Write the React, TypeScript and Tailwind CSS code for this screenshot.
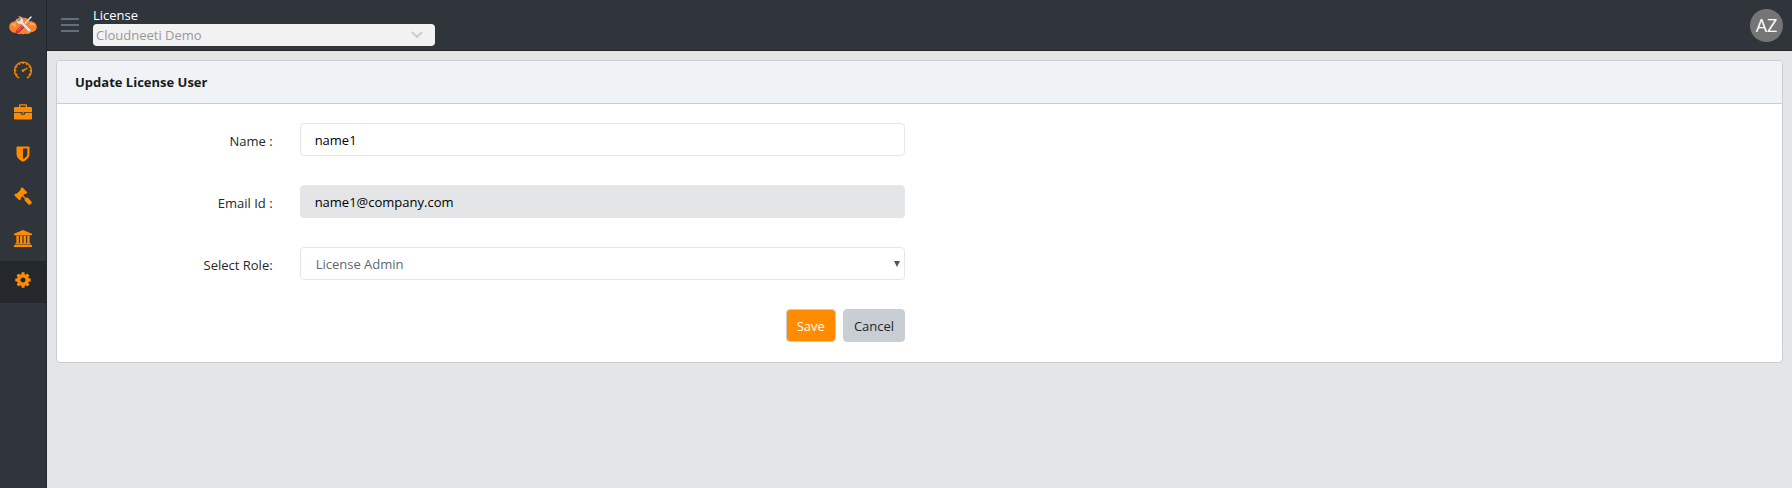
import type { ReactNode } from "react";
import { SlSpeedometer } from "react-icons/sl";

function CloudLogo() {
  return (
    <svg viewBox="0 0 28 20" className="h-5 w-7" aria-hidden="true">
      <path d="M7 17.800C3.500 18.200.2 15.500.2 12 .2 8.500 2.800 6.300 6 6.500 7 3.500 9.500 2.500 13 2.500s6.500 1 7.500 3.800c4 -.3 7.300 2.200 7.300 5.700 0 3.200-2.800 5.400-5.800 5.200-1.500 1.800-3.500 2.300-5.200 1.300-1.500 1-3 1-4.500.2C10.500 19.700 8.500 19 7 17.800z" fill="#fb812c" />
      <path d="M1.500 11C2 8.500 4.500 7.500 7 7.500v5C5 11 3 10.500 1.500 11zM20.500 7.500c3-.2 5.500 1.200 6 3.500-1.800-1-3.800-1-5.500 0z" fill="#ffa264" />
      <path d="M7.300 15.300 13.500 9.300l2.400 2.400-6.200 6.200c-2 1-3.800-.8-2.400-2.600z" fill="#cf2e30" />
      <path d="M8.400 15.900 14 10.500" stroke="#f3a09c" strokeWidth=".8" />
      <path d="M22 2 14.500 10" stroke="#dfe4e8" strokeWidth="1.600" strokeLinecap="round" />
      <path d="M9.500 1.200 11.900 3.600 11.200 5.800 9 6.400 7.200 4.600C6.800 7.800 9.600 9.700 12.300 8.900l7.100 7.500c1.300 1.200 3.200-.5 2.100-1.900L14.300 7.400C15 4.300 12.600 1.300 9.500 1.200z" fill="#e6eaee" stroke="#87909a" strokeWidth=".5" />
    </svg>
  );
}

function Briefcase() {
  return (
    <svg viewBox="0 0 18 16" className="h-4 w-[18px]" fill="currentColor" aria-hidden="true">
      <path fillRule="evenodd" d="M5 3V1.500C5 .7 5.500.2 6.300.2h5.400c.8 0 1.300.5 1.300 1.300V3h3.700c.8 0 1.300.5 1.300 1.300V8H0V4.300C0 3.500.5 3 1.300 3zm1.300 0h5.400V1.500H6.300z" />
      <path d="M0 8.700h6.700v.8c0 .8.700 1.300 1.400 1.300h1.800c.7 0 1.400-.5 1.400-1.300v-.8H18v5.500c0 .8-.5 1.300-1.300 1.300H1.300C.5 15.500 0 15 0 14.200z" />
      <path d="M7.700 8.500h2.600v1.200H7.700z" />
    </svg>
  );
}

function Shield() {
  return (
    <svg viewBox="0 0 14 16" className="h-4 w-3.5" fill="currentColor" aria-hidden="true">
      <path fillRule="evenodd" d="M1.200.5h11.600c.4 0 .7.300.7.700V8c0 3.800-3.500 6.500-6.500 7.700C4 14.500.5 11.800.5 8V1.200c0-.4.300-.7.700-.7zM7 2.500v10.800c2.200-1.200 4.300-3 4.300-5.300V2.500z" />
    </svg>
  );
}

function Gavel() {
  return (
    <svg viewBox="0 0 1792 1792" className="size-[18px]" fill="currentColor" aria-hidden="true">
      <path d="M1771 1536q0 53-37 90l-107 108q-39 37-91 37-53 0-90-37l-363-364q-38-36-38-90 0-53 43-96l-256-256-126 126q-14 14-34 14t-34-14q2 2 12.500 12t12.500 13 10 11.500 10 13.500 6 13.500 5.500 16.500 1.500 18q0 38-28 68-3 3-16.500 18t-19 20.500-18.500 16.500-22 15.500-22 9-26 4.500q-40 0-68-28l-408-408q-28-28-28-68 0-13 4.500-26t9-22 15.500-22 16.500-18.500 20.500-19 18-16.500q30-28 68-28 10 0 18 1.500t16.500 5.500 13.500 6 13.500 10 11.500 10 13 12.500 12 12.500q-14-14-14-34t14-34l348-348q14-14 34-14t34 14q-2-2-12.500-12t-12.500-13-10-11.500-10-13.500-6-13.500-5.500-16.500-1.500-18q0-38 28-68 3-3 16.500-18t19-20.500 18.500-16.500 22-15.500 22-9 26-4.500q40 0 68 28l408 408q28 28 28 68 0 13-4.500 26t-9 22-15.500 22-16.500 18.500-20.500 19-18 16.500q-30 28-68 28-10 0-18-1.500t-16.500-5.500-13.500-6-13.500-10-11.500-10-13-12.500-12-12.500q14 14 14 34t-14 34l-126 126 256 256q43-43 96-43 52 0 91 37l363 363q37 39 37 91z" />
    </svg>
  );
}

function Bank() {
  return (
    <svg viewBox="0 0 1920 1792" className="h-[17px] w-[18px]" fill="currentColor" aria-hidden="true">
      <path d="M960 0l960 384v128h-128q0 26-20.500 45t-48.500 19h-1526q-28 0-48.500-19t-20.500-45h-128v-128zm-704 640h256v768h128v-768h256v768h128v-768h256v768h128v-768h256v768h59q28 0 48.500 19t20.500 45v64h-1664v-64q0-26 20.500-45t48.500-19h59v-768zm1595 960q28 0 48.500 19t20.500 45v128h-1920v-128q0-26 20.500-45t48.500-19h1782z" />
    </svg>
  );
}

function Gear() {
  return (
    <svg viewBox="0 0 1792 1792" className="size-[18px]" fill="currentColor" aria-hidden="true">
      <path d="M1152 896q0-106-75-181t-181-75-181 75-75 181 75 181 181 75 181-75 75-181zm512-109v222q0 12-8 23t-20 13l-185 28q-19 54-39 91 35 50 107 138 10 12 10 25t-9 23q-27 37-99 108t-94 71q-12 0-26-9l-138-108q-44 23-91 38-16 136-29 186-7 28-36 28h-222q-14 0-24.500-8.500t-11.500-21.500l-28-184q-49-16-90-37l-141 107q-10 9-25 9-14 0-25-11-126-114-165-168-7-10-7-23 0-12 8-23 15-21 51-66.500t54-70.500q-27-50-41-99l-183-27q-13-2-21-12.500t-8-23.500v-222q0-12 8-23t19-13l186-28q14-46 39-92-40-57-107-138-10-12-10-24 0-10 9-23 26-36 98.500-107.500t94.500-71.500q13 0 26 10l138 107q44-23 91-38 16-136 29-186 7-28 36-28h222q14 0 24.500 8.500t11.500 21.500l28 184q49 16 90 37l142-107q9-9 24-9 13 0 25 10 129 119 165 170 7 8 7 22 0 12-8 23-15 21-51 66.500t-54 70.500q26 50 41 98l183 28q13 2 21 12.500t8 23.500z" />
    </svg>
  );
}

const items: { label: string; icon: ReactNode }[] = [
  { label: "Dashboard", icon: <SlSpeedometer size={18} strokeWidth={20} stroke="currentColor" /> },
  { label: "Portfolio", icon: <Briefcase /> },
  { label: "Security", icon: <Shield /> },
  { label: "Policies", icon: <Gavel /> },
  { label: "Governance", icon: <Bank /> },
  { label: "Settings", icon: <Gear /> },
];

const field = "h-[33px] w-full rounded-[4px] border border-[#e4e7ea]";
const fieldLabel = "pt-2 text-right";
const action = "h-[33px] rounded-[4px] border border-[#c8ced3] px-[10px]";

export default function App() {
  return (
    <div className="flex min-h-screen bg-[#e4e5e6] font-['Open_Sans','Noto_Sans',sans-serif] text-[13px] leading-5 text-[#23282c]">
      <nav aria-label="Main" className="flex w-[47px] shrink-0 flex-col border-r border-[#23282c] bg-[#2f353a]">
        <a href="#home" aria-label="Home" className="flex h-[51px] items-center justify-center pb-0.5">
          <CloudLogo />
        </a>
        {items.map((item) => (
          <a
            key={item.label}
            href="#section"
            aria-label={item.label}
            className={`flex h-[42px] items-center justify-center pb-1 text-[#ff8c00] ${item.label === "Settings" ? "bg-[#24282c]" : ""}`}
          >
            {item.icon}
          </a>
        ))}
      </nav>
      <div className="flex min-w-0 flex-1 flex-col">
        <header className="flex h-[51px] items-center justify-between border-b border-[#23282c] bg-[#2f353a] pr-[9px] pl-[14px]">
          <div className="flex items-center">
            <button type="button" aria-label="Toggle menu" className="mr-[14px] flex w-[18px] flex-col gap-1">
              <span className="h-0.5 bg-[#5f6f7d]" />
              <span className="h-0.5 bg-[#5f6f7d]" />
              <span className="h-0.5 bg-[#5f6f7d]" />
            </button>
            <div className="flex flex-col pt-0.5">
              <label htmlFor="license" className="leading-[18px] text-white">License</label>
              <div className="grid items-center">
                <select id="license" disabled className="col-start-1 row-start-1 h-[22px] w-[342px] appearance-none rounded-[4px] bg-[#f2f2f2] px-[3px] text-[#999999] opacity-100">
                  <option>Cloudneeti Demo</option>
                </select>
                <svg viewBox="0 0 12 8" className="col-start-1 row-start-1 mr-3 h-2 w-3 justify-self-end" fill="none" stroke="#cccccc" strokeWidth="2" strokeLinecap="round" aria-hidden="true">
                  <path d="M1.500 1.500 6 6l4.500-4.500" />
                </svg>
              </div>
            </div>
          </div>
          <button type="button" aria-label="Account AZ" className="flex size-[33px] items-center justify-center rounded-full bg-[#757575] text-lg text-white">AZ</button>
        </header>
        <main className="px-[9px] pt-[9px]">
          <section className="rounded-[4px] border border-[#c8ced3] bg-white">
            <h1 className="rounded-t-[3px] border-b border-[#c8ced3] bg-[#f0f3f5] px-[18px] py-[11px] text-[13px] leading-5 font-bold text-[#181b1e]">Update License User</h1>
            <form className="grid grid-cols-[12.5%_35.1%] gap-x-[27px] gap-y-[29px] pt-[19px] pb-5">
              <label htmlFor="name" className={fieldLabel}>Name :</label>
              <input id="name" defaultValue="name1" className={`${field} bg-white px-[14px] text-black`} />
              <label htmlFor="email" className={fieldLabel}>Email Id :</label>
              <input id="email" disabled defaultValue="name1@company.com" className={`${field} bg-[#e4e5e6] px-[14px] text-black`} />
              <label htmlFor="role" className={fieldLabel}>Select Role:</label>
              <div className="grid items-center">
                <select id="role" className={`${field} col-start-1 row-start-1 appearance-none bg-white px-[15px] text-[#5c6873]`}>
                  <option>License Admin</option>
                </select>
                <svg viewBox="0 0 6 6" className="pointer-events-none col-start-1 row-start-1 mr-[5px] size-1.5 justify-self-end" fill="#4b5560" aria-hidden="true">
                  <path d="M0 0h6L3 6z" />
                </svg>
              </div>
              <div className="col-start-2 flex justify-end gap-[7px]">
                <button type="button" className={`${action} bg-[#ff8c00] text-white`}>Save</button>
                <button type="button" className={`${action} bg-[#c8ced3] text-[#23282c]`}>Cancel</button>
              </div>
            </form>
          </section>
        </main>
      </div>
    </div>
  );
}
